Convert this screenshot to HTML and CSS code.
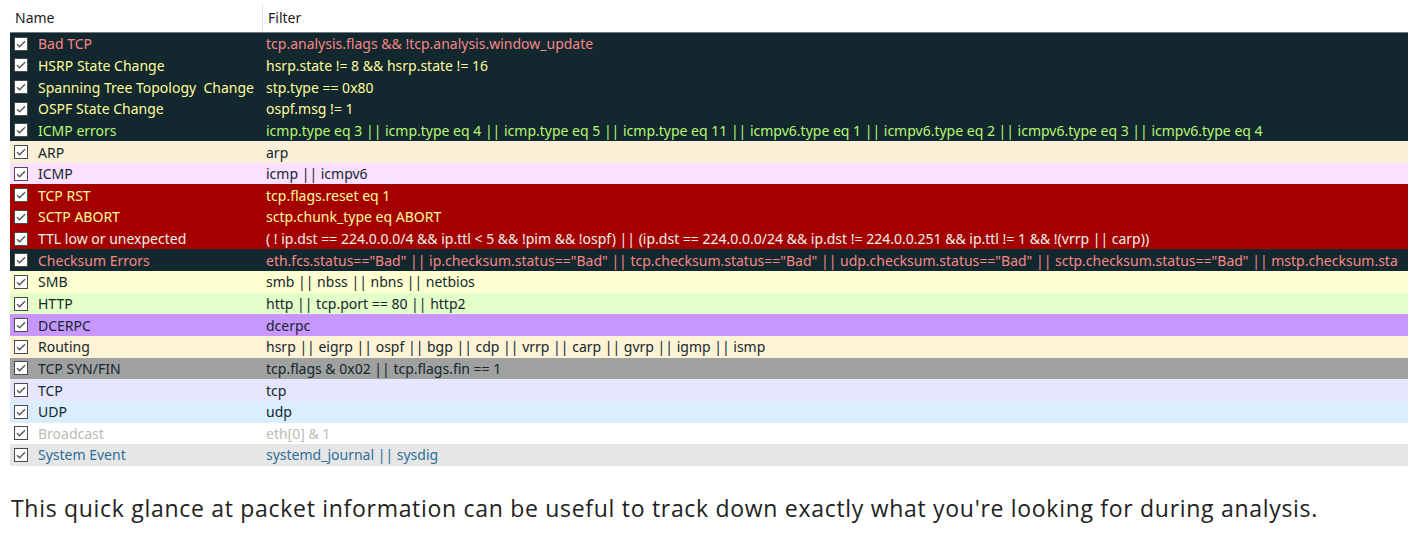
FILE: index.html
```html
<!DOCTYPE html>
<html>
<head>
<meta charset="utf-8">
<link rel="stylesheet" href="styles.css">
</head>
<body>
<div class="table">
  <div class="head">
    <div class="hcell hname">Name</div>
    <div class="hcell hfilter">Filter</div>
  </div>
  <div class="rows">
    <div class="row r-badtcp"><div class="name"><span class="cb"></span>Bad TCP</div><div class="filter">tcp.analysis.flags &amp;&amp; !tcp.analysis.window_update</div></div>
    <div class="row r-hsrp"><div class="name"><span class="cb"></span>HSRP State Change</div><div class="filter">hsrp.state != 8 &amp;&amp; hsrp.state != 16</div></div>
    <div class="row r-hsrp"><div class="name"><span class="cb"></span>Spanning Tree Topology&nbsp; Change</div><div class="filter">stp.type == 0x80</div></div>
    <div class="row r-hsrp"><div class="name"><span class="cb"></span>OSPF State Change</div><div class="filter">ospf.msg != 1</div></div>
    <div class="row r-icmperr"><div class="name"><span class="cb"></span>ICMP errors</div><div class="filter">icmp.type eq 3 || icmp.type eq 4 || icmp.type eq 5 || icmp.type eq 11 || icmpv6.type eq 1 || icmpv6.type eq 2 || icmpv6.type eq 3 || icmpv6.type eq 4</div></div>
    <div class="row r-arp"><div class="name"><span class="cb"></span>ARP</div><div class="filter">arp</div></div>
    <div class="row r-icmp"><div class="name"><span class="cb"></span>ICMP</div><div class="filter">icmp || icmpv6</div></div>
    <div class="row r-rst"><div class="name"><span class="cb"></span>TCP RST</div><div class="filter">tcp.flags.reset eq 1</div></div>
    <div class="row r-rst"><div class="name"><span class="cb"></span>SCTP ABORT</div><div class="filter">sctp.chunk_type eq ABORT</div></div>
    <div class="row r-ttl"><div class="name"><span class="cb"></span>TTL low or unexpected</div><div class="filter">( ! ip.dst == 224.0.0.0/4 &amp;&amp; ip.ttl &lt; 5 &amp;&amp; !pim &amp;&amp; !ospf) || (ip.dst == 224.0.0.0/24 &amp;&amp; ip.dst != 224.0.0.251 &amp;&amp; ip.ttl != 1 &amp;&amp; !(vrrp || carp))</div></div>
    <div class="row r-badtcp"><div class="name"><span class="cb"></span>Checksum Errors</div><div class="filter">eth.fcs.status=="Bad" || ip.checksum.status=="Bad" || tcp.checksum.status=="Bad" || udp.checksum.status=="Bad" || sctp.checksum.status=="Bad" || mstp.checksum.sta</div></div>
    <div class="row r-smb"><div class="name"><span class="cb"></span>SMB</div><div class="filter">smb || nbss || nbns || netbios</div></div>
    <div class="row r-http"><div class="name"><span class="cb"></span>HTTP</div><div class="filter">http || tcp.port == 80 || http2</div></div>
    <div class="row r-dcerpc"><div class="name"><span class="cb"></span>DCERPC</div><div class="filter">dcerpc</div></div>
    <div class="row r-routing"><div class="name"><span class="cb"></span>Routing</div><div class="filter">hsrp || eigrp || ospf || bgp || cdp || vrrp || carp || gvrp || igmp || ismp</div></div>
    <div class="row r-synfin"><div class="name"><span class="cb"></span>TCP SYN/FIN</div><div class="filter">tcp.flags &amp; 0x02 || tcp.flags.fin == 1</div></div>
    <div class="row r-tcp"><div class="name"><span class="cb"></span>TCP</div><div class="filter">tcp</div></div>
    <div class="row r-udp"><div class="name"><span class="cb"></span>UDP</div><div class="filter">udp</div></div>
    <div class="row r-bcast"><div class="name"><span class="cb"></span>Broadcast</div><div class="filter">eth[0] &amp; 1</div></div>
    <div class="row r-sys"><div class="name"><span class="cb"></span>System Event</div><div class="filter">systemd_journal || sysdig</div></div>
  </div>
</div>
<p class="caption">This quick glance at packet information can be useful to track down exactly what you're looking for during analysis.</p>
</body>
</html>
```

FILE: styles.css
```css
html, body {
  margin: 0;
  padding: 0;
  background: #ffffff;
}
.table {
  margin-left: 10px;
  width: 1398px;
  font-family: "Noto Sans", "Open Sans", sans-serif;
  font-size: 14px;
  overflow: hidden;
}
.head {
  display: grid;
  grid-template-columns: 252px 1fr;
  height: 32px;
  color: #1a1a1a;
}
.hcell {
  display: flex;
  align-items: center;
  padding-top: 2px;
}
.hname {
  padding-left: 5px;
}
.hfilter {
  padding-left: 5px;
  border-left: 1px solid #e5e5e5;
  margin-top: 3px;
  padding-top: 0;
}
.rows {
  border-top: 1px solid #6e7a80;
}
.row {
  display: grid;
  grid-template-columns: 252px 1fr;
  height: 21.65px;
  align-items: center;
  white-space: nowrap;
}
.name {
  display: flex;
  align-items: center;
  gap: 10px;
  padding-left: 4px;
  overflow: hidden;
}
.filter {
  padding-left: 4px;
  overflow: hidden;
}
.cb {
  width: 12px;
  height: 12px;
  flex: none;
  border: 1px solid #4a4a4a;
  background: #ffffff url("data:image/svg+xml;utf8,<svg xmlns='http://www.w3.org/2000/svg' width='12' height='12' viewBox='0 0 12 12'><path d='M2 6.2 L4.6 8.8 L10 3.2' fill='none' stroke='%23555' stroke-width='1.3'/></svg>") no-repeat center;
}
.r-badtcp { background: #12272e; color: #f78787; }
.r-hsrp { background: #12272e; color: #fffc9c; }
.r-icmperr { background: #12272e; color: #b7f774; }
.r-arp { background: #faf0d7; color: #12272e; }
.r-icmp { background: #fce0ff; color: #12272e; }
.r-rst { background: #a40000; color: #fffc9c; }
.r-ttl { background: #a40000; color: #eef0eb; }
.r-smb { background: #feffd0; color: #12272e; }
.r-http { background: #e4ffc7; color: #12272e; }
.r-dcerpc { background: #c797ff; color: #12272e; }
.r-routing { background: #fff3d6; color: #12272e; }
.r-synfin { background: #a0a0a0; color: #12272e; }
.r-tcp { background: #e7e6ff; color: #12272e; }
.r-udp { background: #daeeff; color: #12272e; }
.r-bcast { background: #ffffff; color: #babdb6; }
.r-sys { background: #e6e6e6; color: #2d6f9a; }
.caption {
  margin: 26px 0 0 11px;
  font-family: "Open Sans", "Noto Sans", sans-serif;
  font-size: 23px;
  letter-spacing: 0.7px;
  line-height: 32px;
  color: #222222;
}
```
